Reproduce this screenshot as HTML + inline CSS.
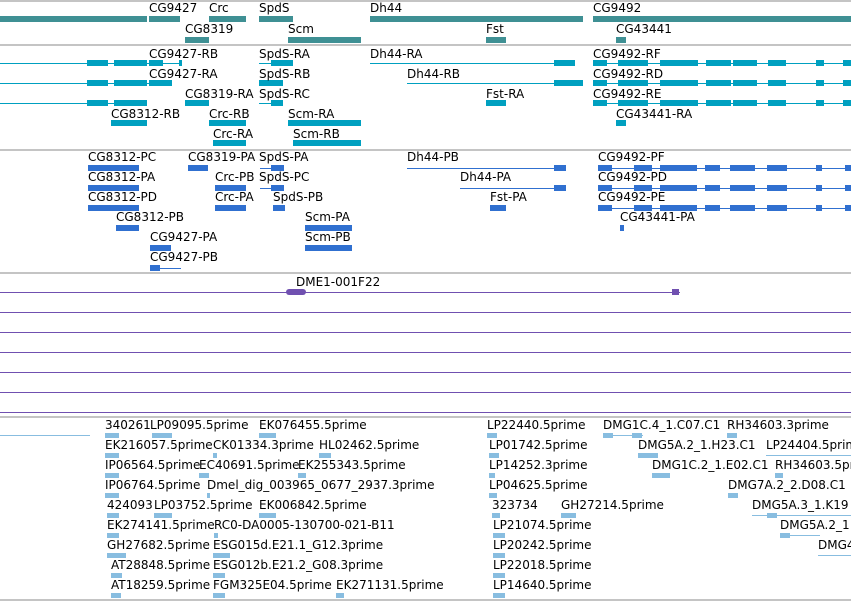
<!DOCTYPE html>
<html><head><meta charset="utf-8"><style>
body{margin:0;width:851px;height:601px;background:#fff;position:relative;overflow:hidden;font-family:"DejaVu Sans","Liberation Sans",sans-serif}
div{position:absolute}
.l{font-size:12px;line-height:14px;color:#000;white-space:nowrap}
.g{left:0;width:851px;height:2px;background:#c4c4c4}
.t{background:#3f9094;height:6px}
.c{background:#00a0c0}
.b{background:#3070d0}
.p{background:#7050b0}
.e{background:#88bde0}
.ln{height:1px}
.x{height:6px}
.s{height:5px}
</style></head><body>
<div class="g" style="top:0"></div>
<div class="g" style="top:44px"></div>
<div class="g" style="top:149px"></div>
<div class="g" style="top:272px"></div>
<div class="g" style="top:416px"></div>
<div class="g" style="top:599px"></div>

<!-- top gene track -->
<div class="t" style="top:16px;left:0;width:147px"></div>
<div class="t" style="top:16px;left:149px;width:31px"></div>
<div class="t" style="top:16px;left:209px;width:37px"></div>
<div class="t" style="top:16px;left:259px;width:34px"></div>
<div class="t" style="top:16px;left:370px;width:213px"></div>
<div class="t" style="top:16px;left:593px;width:258px"></div>
<div class="t" style="top:37px;left:185px;width:24px"></div>
<div class="t" style="top:37px;left:288px;width:73px"></div>
<div class="t" style="top:37px;left:486px;width:20px"></div>
<div class="t" style="top:37px;left:616px;width:10px"></div>
<div class="l" style="top:1px;left:149px">CG9427</div>
<div class="l" style="top:1px;left:209px">Crc</div>
<div class="l" style="top:1px;left:259px">SpdS</div>
<div class="l" style="top:1px;left:370px">Dh44</div>
<div class="l" style="top:1px;left:593px">CG9492</div>
<div class="l" style="top:22px;left:185px">CG8319</div>
<div class="l" style="top:22px;left:288px">Scm</div>
<div class="l" style="top:22px;left:486px">Fst</div>
<div class="l" style="top:22px;left:616px">CG43441</div>

<!-- transcripts (cyan) -->
<div class="c ln" style="top:63px;left:0;width:182px"></div>
<div class="c x" style="top:60px;left:87px;width:21px"></div>
<div class="c x" style="top:60px;left:114px;width:33px"></div>
<div class="c x" style="top:60px;left:149px;width:14px"></div>
<div class="c x" style="top:60px;left:179px;width:3px"></div>
<div class="c ln" style="top:63px;left:259px;width:34px"></div>
<div class="c x" style="top:60px;left:271px;width:22px"></div>
<div class="c ln" style="top:63px;left:370px;width:205px"></div>
<div class="c x" style="top:60px;left:554px;width:21px"></div>
<div class="c ln" style="top:83px;left:0;width:172px"></div>
<div class="c x" style="top:80px;left:87px;width:21px"></div>
<div class="c x" style="top:80px;left:114px;width:33px"></div>
<div class="c x" style="top:80px;left:149px;width:23px"></div>
<div class="c x" style="top:80px;left:259px;width:24px"></div>
<div class="c ln" style="top:83px;left:407px;width:176px"></div>
<div class="c x" style="top:80px;left:554px;width:29px"></div>
<div class="c ln" style="top:103px;left:0;width:147px"></div>
<div class="c x" style="top:100px;left:87px;width:21px"></div>
<div class="c x" style="top:100px;left:114px;width:33px"></div>
<div class="c x" style="top:100px;left:185px;width:24px"></div>
<div class="c ln" style="top:103px;left:259px;width:24px"></div>
<div class="c x" style="top:100px;left:271px;width:12px"></div>
<div class="c x" style="top:100px;left:486px;width:20px"></div>
<div class="c x" style="top:120px;left:111px;width:36px"></div>
<div class="c x" style="top:120px;left:209px;width:37px"></div>
<div class="c x" style="top:120px;left:288px;width:73px"></div>
<div class="c x" style="top:120px;left:616px;width:10px"></div>
<div class="c x" style="top:140px;left:213px;width:33px"></div>
<div class="c x" style="top:140px;left:293px;width:68px"></div>
<!-- CG9492 R rows -->
<div class="c ln" style="top:63px;left:593px;width:258px"></div>
<div class="c ln" style="top:83px;left:593px;width:258px"></div>
<div class="c ln" style="top:103px;left:593px;width:258px"></div>
<div class="c x" style="top:60px;left:593px;width:14px"></div><div class="c x" style="top:60px;left:618px;width:30px"></div><div class="c x" style="top:60px;left:660px;width:38px"></div><div class="c x" style="top:60px;left:706px;width:25px"></div><div class="c x" style="top:60px;left:733px;width:24px"></div><div class="c x" style="top:60px;left:768px;width:18px"></div><div class="c x" style="top:60px;left:816px;width:8px"></div><div class="c x" style="top:60px;left:843px;width:8px"></div>
<div class="c x" style="top:80px;left:593px;width:14px"></div><div class="c x" style="top:80px;left:618px;width:30px"></div><div class="c x" style="top:80px;left:660px;width:38px"></div><div class="c x" style="top:80px;left:706px;width:25px"></div><div class="c x" style="top:80px;left:733px;width:24px"></div><div class="c x" style="top:80px;left:768px;width:18px"></div><div class="c x" style="top:80px;left:816px;width:8px"></div><div class="c x" style="top:80px;left:843px;width:8px"></div>
<div class="c x" style="top:100px;left:593px;width:14px"></div><div class="c x" style="top:100px;left:618px;width:30px"></div><div class="c x" style="top:100px;left:660px;width:38px"></div><div class="c x" style="top:100px;left:706px;width:25px"></div><div class="c x" style="top:100px;left:733px;width:24px"></div><div class="c x" style="top:100px;left:768px;width:18px"></div><div class="c x" style="top:100px;left:816px;width:8px"></div><div class="c x" style="top:100px;left:843px;width:8px"></div>
<div class="l" style="top:47px;left:149px">CG9427-RB</div>
<div class="l" style="top:47px;left:259px">SpdS-RA</div>
<div class="l" style="top:47px;left:370px">Dh44-RA</div>
<div class="l" style="top:47px;left:593px">CG9492-RF</div>
<div class="l" style="top:67px;left:149px">CG9427-RA</div>
<div class="l" style="top:67px;left:259px">SpdS-RB</div>
<div class="l" style="top:67px;left:407px">Dh44-RB</div>
<div class="l" style="top:67px;left:593px">CG9492-RD</div>
<div class="l" style="top:87px;left:185px">CG8319-RA</div>
<div class="l" style="top:87px;left:259px">SpdS-RC</div>
<div class="l" style="top:87px;left:486px">Fst-RA</div>
<div class="l" style="top:87px;left:593px">CG9492-RE</div>
<div class="l" style="top:107px;left:111px">CG8312-RB</div>
<div class="l" style="top:107px;left:209px">Crc-RB</div>
<div class="l" style="top:107px;left:288px">Scm-RA</div>
<div class="l" style="top:107px;left:616px">CG43441-RA</div>
<div class="l" style="top:127px;left:213px">Crc-RA</div>
<div class="l" style="top:127px;left:293px">Scm-RB</div>

<!-- blue proteins -->
<div class="b x" style="top:165px;left:88px;width:51px"></div>
<div class="b x" style="top:165px;left:188px;width:20px"></div>
<div class="b ln" style="top:168px;left:260px;width:24px"></div><div class="b x" style="top:165px;left:271px;width:13px"></div>
<div class="b ln" style="top:168px;left:407px;width:159px"></div><div class="b x" style="top:165px;left:554px;width:12px"></div>
<div class="b x" style="top:185px;left:88px;width:51px"></div>
<div class="b x" style="top:185px;left:215px;width:31px"></div>
<div class="b ln" style="top:188px;left:260px;width:24px"></div><div class="b x" style="top:185px;left:271px;width:13px"></div>
<div class="b ln" style="top:188px;left:460px;width:106px"></div><div class="b x" style="top:185px;left:554px;width:12px"></div>
<div class="b x" style="top:205px;left:88px;width:51px"></div>
<div class="b x" style="top:205px;left:215px;width:31px"></div>
<div class="b x" style="top:205px;left:273px;width:12px"></div>
<div class="b x" style="top:205px;left:490px;width:16px"></div>
<div class="b x" style="top:225px;left:116px;width:23px"></div>
<div class="b x" style="top:225px;left:305px;width:47px"></div>
<div class="b x" style="top:225px;left:620px;width:4px"></div>
<div class="b x" style="top:245px;left:150px;width:21px"></div>
<div class="b x" style="top:245px;left:305px;width:47px"></div>
<div class="b ln" style="top:268px;left:150px;width:31px"></div><div class="b x" style="top:265px;left:150px;width:10px"></div>
<div class="b ln" style="top:168px;left:598px;width:253px"></div>
<div class="b ln" style="top:188px;left:598px;width:253px"></div>
<div class="b ln" style="top:208px;left:598px;width:253px"></div>
<div class="b x" style="top:165px;left:598px;width:14px"></div><div class="b x" style="top:165px;left:634px;width:18px"></div><div class="b x" style="top:165px;left:660px;width:37px"></div><div class="b x" style="top:165px;left:705px;width:15px"></div><div class="b x" style="top:165px;left:730px;width:25px"></div><div class="b x" style="top:165px;left:767px;width:20px"></div><div class="b x" style="top:165px;left:816px;width:6px"></div><div class="b x" style="top:165px;left:845px;width:6px"></div>
<div class="b x" style="top:185px;left:598px;width:14px"></div><div class="b x" style="top:185px;left:634px;width:18px"></div><div class="b x" style="top:185px;left:660px;width:37px"></div><div class="b x" style="top:185px;left:705px;width:15px"></div><div class="b x" style="top:185px;left:730px;width:25px"></div><div class="b x" style="top:185px;left:767px;width:20px"></div><div class="b x" style="top:185px;left:816px;width:6px"></div><div class="b x" style="top:185px;left:845px;width:6px"></div>
<div class="b x" style="top:205px;left:598px;width:14px"></div><div class="b x" style="top:205px;left:634px;width:18px"></div><div class="b x" style="top:205px;left:660px;width:37px"></div><div class="b x" style="top:205px;left:705px;width:15px"></div><div class="b x" style="top:205px;left:730px;width:25px"></div><div class="b x" style="top:205px;left:767px;width:20px"></div><div class="b x" style="top:205px;left:816px;width:6px"></div><div class="b x" style="top:205px;left:845px;width:6px"></div>
<div class="l" style="top:150px;left:88px">CG8312-PC</div>
<div class="l" style="top:150px;left:188px">CG8319-PA</div>
<div class="l" style="top:150px;left:259px">SpdS-PA</div>
<div class="l" style="top:150px;left:407px">Dh44-PB</div>
<div class="l" style="top:150px;left:598px">CG9492-PF</div>
<div class="l" style="top:170px;left:88px">CG8312-PA</div>
<div class="l" style="top:170px;left:215px">Crc-PB</div>
<div class="l" style="top:170px;left:259px">SpdS-PC</div>
<div class="l" style="top:170px;left:460px">Dh44-PA</div>
<div class="l" style="top:170px;left:598px">CG9492-PD</div>
<div class="l" style="top:190px;left:88px">CG8312-PD</div>
<div class="l" style="top:190px;left:215px">Crc-PA</div>
<div class="l" style="top:190px;left:273px">SpdS-PB</div>
<div class="l" style="top:190px;left:490px">Fst-PA</div>
<div class="l" style="top:190px;left:598px">CG9492-PE</div>
<div class="l" style="top:210px;left:116px">CG8312-PB</div>
<div class="l" style="top:210px;left:305px">Scm-PA</div>
<div class="l" style="top:210px;left:620px">CG43441-PA</div>
<div class="l" style="top:230px;left:150px">CG9427-PA</div>
<div class="l" style="top:230px;left:305px">Scm-PB</div>
<div class="l" style="top:250px;left:150px">CG9427-PB</div>

<!-- purple -->
<div class="l" style="top:275px;left:296px">DME1-001F22</div>
<div class="p" style="top:292px;left:0;width:680px;height:1px"></div>
<div class="p" style="top:289px;left:286px;width:20px;height:6px;border-radius:3px"></div>
<div class="p" style="top:289px;left:672px;width:7px;height:6px"></div>
<div class="p" style="top:312px;left:0;width:851px;height:1px"></div>
<div class="p" style="top:332px;left:0;width:851px;height:1px"></div>
<div class="p" style="top:352px;left:0;width:851px;height:1px"></div>
<div class="p" style="top:372px;left:0;width:851px;height:1px"></div>
<div class="p" style="top:392px;left:0;width:851px;height:1px"></div>
<div class="p" style="top:412px;left:0;width:851px;height:1px"></div>

<!-- ESTs -->
<div class="e" style="top:435px;left:0;width:90px;height:1px"></div>
<div class="e s" style="top:433px;left:105px;width:14px"></div>
<div class="e s" style="top:433px;left:152px;width:20px"></div>
<div class="e s" style="top:433px;left:259px;width:17px"></div>
<div class="e s" style="top:433px;left:487px;width:10px"></div>
<div class="e" style="top:435px;left:603px;width:40px;height:1px"></div><div class="e s" style="top:433px;left:603px;width:10px"></div><div class="e s" style="top:433px;left:632px;width:10px"></div>
<div class="e s" style="top:433px;left:727px;width:10px"></div>
<div class="e s" style="top:453px;left:105px;width:14px"></div>
<div class="e s" style="top:453px;left:213px;width:4px"></div>
<div class="e s" style="top:453px;left:319px;width:12px"></div>
<div class="e s" style="top:453px;left:489px;width:10px"></div>
<div class="e s" style="top:453px;left:638px;width:20px"></div>
<div class="e" style="top:455px;left:766px;width:85px;height:1px"></div>
<div class="e s" style="top:473px;left:105px;width:14px"></div>
<div class="e s" style="top:473px;left:199px;width:10px"></div>
<div class="e s" style="top:473px;left:298px;width:8px"></div>
<div class="e s" style="top:473px;left:489px;width:6px"></div>
<div class="e s" style="top:473px;left:652px;width:18px"></div>
<div class="e s" style="top:473px;left:775px;width:8px"></div>
<div class="e s" style="top:493px;left:105px;width:14px"></div>
<div class="e s" style="top:493px;left:207px;width:3px"></div>
<div class="e s" style="top:493px;left:489px;width:8px"></div>
<div class="e s" style="top:493px;left:728px;width:10px"></div>
<div class="e s" style="top:513px;left:107px;width:12px"></div>
<div class="e s" style="top:513px;left:154px;width:18px"></div>
<div class="e s" style="top:513px;left:259px;width:17px"></div>
<div class="e s" style="top:513px;left:492px;width:8px"></div>
<div class="e s" style="top:513px;left:561px;width:15px"></div>
<div class="e" style="top:515px;left:752px;width:99px;height:1px"></div><div class="e s" style="top:513px;left:767px;width:10px"></div>
<div class="e s" style="top:533px;left:107px;width:12px"></div>
<div class="e s" style="top:533px;left:214px;width:4px"></div>
<div class="e s" style="top:533px;left:493px;width:12px"></div>
<div class="e" style="top:535px;left:780px;width:40px;height:1px"></div><div class="e s" style="top:533px;left:780px;width:10px"></div>
<div class="e s" style="top:553px;left:107px;width:19px"></div>
<div class="e s" style="top:553px;left:213px;width:17px"></div>
<div class="e s" style="top:553px;left:493px;width:12px"></div>
<div class="e" style="top:555px;left:818px;width:33px;height:1px"></div>
<div class="e s" style="top:573px;left:111px;width:11px"></div>
<div class="e s" style="top:573px;left:213px;width:12px"></div>
<div class="e s" style="top:573px;left:493px;width:12px"></div>
<div class="e s" style="top:593px;left:111px;width:10px"></div>
<div class="e s" style="top:593px;left:213px;width:12px"></div>
<div class="e s" style="top:593px;left:336px;width:8px"></div>
<div class="e s" style="top:593px;left:493px;width:12px"></div>

<div class="l" style="top:418px;left:105px">340261</div>
<div class="l" style="top:418px;left:150px">LP09095.5prime</div>
<div class="l" style="top:418px;left:259px">EK076455.5prime</div>
<div class="l" style="top:418px;left:487px">LP22440.5prime</div>
<div class="l" style="top:418px;left:603px">DMG1C.4_1.C07.C1</div>
<div class="l" style="top:418px;left:727px">RH34603.3prime</div>
<div class="l" style="top:438px;left:105px">EK216057.5prime</div>
<div class="l" style="top:438px;left:213px">CK01334.3prime</div>
<div class="l" style="top:438px;left:319px">HL02462.5prime</div>
<div class="l" style="top:438px;left:489px">LP01742.5prime</div>
<div class="l" style="top:438px;left:638px">DMG5A.2_1.H23.C1</div>
<div class="l" style="top:438px;left:766px">LP24404.5prime</div>
<div class="l" style="top:458px;left:105px">IP06564.5prime</div>
<div class="l" style="top:458px;left:199px">EC40691.5prime</div>
<div class="l" style="top:458px;left:298px">EK255343.5prime</div>
<div class="l" style="top:458px;left:489px">LP14252.3prime</div>
<div class="l" style="top:458px;left:652px">DMG1C.2_1.E02.C1</div>
<div class="l" style="top:458px;left:775px">RH34603.5prime</div>
<div class="l" style="top:478px;left:105px">IP06764.5prime</div>
<div class="l" style="top:478px;left:207px">Dmel_dig_003965_0677_2937.3prime</div>
<div class="l" style="top:478px;left:489px">LP04625.5prime</div>
<div class="l" style="top:478px;left:728px">DMG7A.2_2.D08.C1</div>
<div class="l" style="top:498px;left:107px">424093</div>
<div class="l" style="top:498px;left:154px">LP03752.5prime</div>
<div class="l" style="top:498px;left:259px">EK006842.5prime</div>
<div class="l" style="top:498px;left:492px">323734</div>
<div class="l" style="top:498px;left:561px">GH27214.5prime</div>
<div class="l" style="top:498px;left:752px">DMG5A.3_1.K19</div>
<div class="l" style="top:518px;left:107px">EK274141.5prime</div>
<div class="l" style="top:518px;left:214px">RC0-DA0005-130700-021-B11</div>
<div class="l" style="top:518px;left:493px">LP21074.5prime</div>
<div class="l" style="top:518px;left:780px">DMG5A.2_1</div>
<div class="l" style="top:538px;left:107px">GH27682.5prime</div>
<div class="l" style="top:538px;left:213px">ESG015d.E21.1_G12.3prime</div>
<div class="l" style="top:538px;left:493px">LP20242.5prime</div>
<div class="l" style="top:538px;left:818px">DMG4</div>
<div class="l" style="top:558px;left:111px">AT28848.5prime</div>
<div class="l" style="top:558px;left:213px">ESG012b.E21.2_G08.3prime</div>
<div class="l" style="top:558px;left:493px">LP22018.5prime</div>
<div class="l" style="top:578px;left:111px">AT18259.5prime</div>
<div class="l" style="top:578px;left:213px">FGM325E04.5prime</div>
<div class="l" style="top:578px;left:336px">EK271131.5prime</div>
<div class="l" style="top:578px;left:493px">LP14640.5prime</div>
</body></html>
